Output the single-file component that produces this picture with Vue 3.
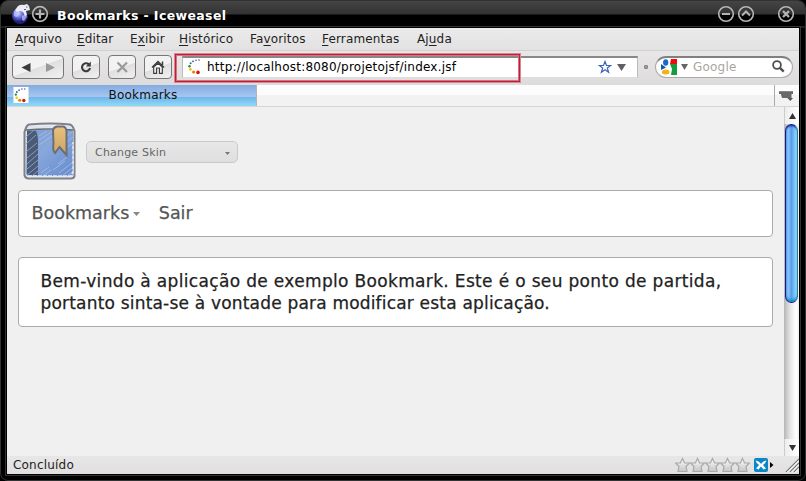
<script setup>
const menus = [
  { pre: '', key: 'A', post: 'rquivo', w: 62 },
  { pre: '', key: 'E', post: 'ditar', w: 53 },
  { pre: 'E', key: 'x', post: 'ibir', w: 49 },
  { pre: '', key: 'H', post: 'istórico', w: 71 },
  { pre: 'Fa', key: 'v', post: 'oritos', w: 72 },
  { pre: '', key: 'F', post: 'erramentas', w: 95 },
  { pre: 'Aj', key: 'u', post: 'da', w: 50 }
]
const dots = [
  [12, 2, .8, '#8b3a8f'], [9, 2.2, .8, '#51458f'], [6, 3.3, .9, '#2d4f9c'],
  [3.6, 5.3, 1, '#28709a'], [2.5, 8.2, 1.2, '#238340'], [3.4, 11.4, 1.4, '#f3c500'],
  [6.6, 14, 1.6, '#ef7d00'], [11, 14.4, 1.8, '#d9160c']
]
</script>

<template>
  <div class="window">
    <header class="titlebar">
      <svg class="globe" width="20" height="22" viewBox="0 0 20 22">
        <defs>
          <radialGradient id="globe" cx=".4" cy=".35"><stop offset="0" stop-color="#c9d3ff" /><stop offset=".5" stop-color="#6a75e0" /><stop offset="1" stop-color="#20207c" /></radialGradient>
        </defs>
        <circle cx="9" cy="13" r="8" fill="url(#globe)" />
        <path d="M3 8l4-1 2 3-3 4-3-1zM11 13l4-2 1 3-3 4-2-1z" fill="#c3ccff" opacity=".7" />
        <path d="M7 3Q10 1 13 2l3-1 2 2 1 4-4 1 1 4-2 1-2-4-3-1-3 1-2-2z" fill="#ececf7" />
        <path d="M15 4h1.500M13 6.500h2" stroke="#666" />
      </svg>
      <svg width="18" height="18" viewBox="0 0 18 18" fill="none" stroke="#b4b4b4">
        <circle cx="9" cy="9" r="7.3" stroke-width="1.7" /><path d="M9 4.500v9M4.500 9h9" stroke-width="2.2" />
      </svg>
      <h1>Bookmarks - Iceweasel</h1>
      <div class="controls">
        <svg width="18" height="18" viewBox="0 0 18 18" fill="none" stroke="#b4b4b4"><circle cx="9" cy="9" r="7.3" stroke-width="1.6" /><path d="M5 9h8" stroke-width="2" /></svg>
        <svg width="18" height="18" viewBox="0 0 18 18" fill="none" stroke="#b4b4b4"><circle cx="9" cy="9" r="7.3" stroke-width="1.6" /><path d="M5 10.500l4-4 4 4" stroke-width="2" /></svg>
        <svg class="close" width="18" height="18" viewBox="0 0 18 18" fill="none" stroke="#b4b4b4"><circle cx="9" cy="9" r="7.3" stroke-width="1.6" /><path d="M6 6l6 6M12 6l-6 6" stroke-width="2.3" /></svg>
      </div>
    </header>

    <div class="client">
      <nav class="menubar">
        <span v-for="m in menus" :key="m.post" :style="{ width: m.w + 'px' }">{{ m.pre }}<u>{{ m.key }}</u>{{ m.post }}</span>
      </nav>

      <div class="toolbar">
        <button class="btn wide">
          <svg width="50" height="22" viewBox="0 0 50 22"><path d="M8.500 11.500l9-4.500v9z" fill="#3c3c3c" /><path d="M42 11.500l-9-4.500v9z" fill="#999" /></svg>
        </button>
        <button class="btn">
          <svg width="26" height="22" viewBox="0 0 26 22"><path d="M15.800 8.300A4 4 0 1 0 17 12" fill="none" stroke="#3c3c3c" stroke-width="2.100" /><path d="M17.800 5.500v5h-5z" fill="#3c3c3c" /></svg>
        </button>
        <button class="btn">
          <svg width="26" height="22" viewBox="0 0 26 22"><path d="M8.500 6.500l9.500 9.500M18 6.500L8.500 16" stroke="#999" stroke-width="2.200" /></svg>
        </button>
        <button class="btn">
          <svg width="26" height="22" viewBox="0 0 26 22"><path d="M7 11.500L13 5.500l6 6M17.500 9V5.500" fill="none" stroke="#3c3c3c" stroke-width="1.500" /><path d="M8.700 11v6.300h2.800V12h3v5.300h2.800V11L13 7.300z" fill="#fff" stroke="#3c3c3c" stroke-width="1.200" /></svg>
        </button>
        <div class="address">
          <svg class="fav" width="16" height="17" viewBox="0 0 16 17"><circle v-for="d in dots" :key="d[0]" :cx="d[0]" :cy="d[1]" :r="d[2]" :fill="d[3]" /></svg>
          <span class="url">http://localhost:8080/projetojsf/index.jsf</span>
          <svg class="star" width="14" height="14" viewBox="0 0 14 14"><path d="M7 1.500l1.500 4h4.200L9.300 8l1.300 4.300L7 9.700l-3.600 2.600L4.700 8 1.300 5.500h4.200z" fill="#fff" stroke="#3a62bd" stroke-width="1.200" /></svg>
          <svg width="9" height="7" viewBox="0 0 9 7"><path d="M0 0h9L4.500 7z" fill="#606060" /></svg>
          <div class="highlight"></div>
        </div>
        <i class="grip"></i>
        <div class="search">
          <svg width="16" height="16" viewBox="0 0 16 16">
            <path d="M9 0h7v5.500H8z" fill="#f00b0b" /><path d="M9 5h7v11H8z" fill="#159b40" />
            <path d="M5 0h5l-1 5 2 5-1 6H1l-1-4 4-4-2-5z" fill="#fff" /><ellipse cx="4.700" cy="3.500" rx="2.600" ry="3.300" fill="#1768cd" /><ellipse cx="4.700" cy="13" rx="3.800" ry="2.500" fill="#f3b216" /><path d="M0 5l5 3.500L0 11z" fill="#1554ad" />
          </svg>
          <svg class="drop" width="7" height="6" viewBox="0 0 7 6"><path d="M0 0h7L3.500 6z" fill="#666" /></svg>
          <span>Google</span>
          <svg class="lens" width="13" height="13" viewBox="0 0 13 13" fill="none" stroke="#505050"><circle cx="5" cy="5" r="3.900" stroke-width="1.800" /><path d="M7.700 7.700l4 4" stroke-width="2.400" /></svg>
        </div>
      </div>

      <div class="tabs">
        <div class="tab">
          <svg width="16" height="16" viewBox="0 0 16 17"><path d="M0 0h16v17H0z" fill="#fff" /><circle v-for="d in dots" :key="d[0]" :cx="d[0]" :cy="d[1]" :r="d[2]" :fill="d[3]" /></svg>
          <span>Bookmarks</span>
        </div>
        <div class="tablist">
          <svg width="15" height="12" viewBox="0 0 15 12"><path d="M0 1h14v3h-1.500v4.500H9l-.5-.5H3L1.800 4H0z" fill="#696969" /><path d="M0 1.500h14" stroke="#888" /><path d="M8.500 8h5.500l-2.700 3z" fill="#555" /></svg>
        </div>
      </div>

      <div class="viewport">
        <main>
          <div class="brand">
            <svg width="54" height="58" viewBox="0 0 54 58">
              <defs>
                <linearGradient id="cover" x2="1" y2="1"><stop offset="0" stop-color="#7c9bd0" /><stop offset=".4" stop-color="#88a8dc" /><stop offset="1" stop-color="#668bcd" /></linearGradient>
                <linearGradient id="ribbon" x2="0" y2="1"><stop stop-color="#e9c07c" /><stop offset="1" stop-color="#cda467" /></linearGradient>
              </defs>
              <path d="M2.500 7Q4 3 6 2.500Q28 .5 47 2.500Q50 4 51.500 9V54Q51 56.500 48 56.500H5Q2 56 1.500 53V10z" fill="#e6ecf6" stroke="#808184" stroke-width="2" />
              <path d="M4 8H50V53Q49 54 46 54H5Q3 53 3 51z" fill="url(#cover)" />
              <path d="M4 9h9q2 4 2 12v32H4z" fill="#4b5b75" />
              <path d="M3 15l7-6M3 22l10-9M3 30l11-9M4 36l11-9M4 42l11-10M4 47l11-9M4 53l11-9M9 54l7-6" stroke="#8ba2cc" stroke-width=".9" />
              <path d="M16 14l8-5M16 18l14-9M16 23l13-9M35 42l9-7M30 48l12-9M36 51l13-10M39 54l10-8M43 55l6-5M44 14l6-5M44 20l6-5M43 26l7-5M18 51l8-6M20 54l8-6" stroke="#a9bfe6" stroke-width=".8" />
              <path d="M6 4h42l2 3.500H4z" fill="#dde5f2" /><path d="M3 8Q26 6 50 8" stroke="#666c76" stroke-width="1.600" fill="none" />
              <path d="M5 54h43l2-4V20" stroke="#e3eaf7" stroke-width="1.500" stroke-dasharray="4 1" fill="none" />
              <path d="M30 8Q31 5 34 4.500H40Q43 5 43.500 9L43.500 33L36.500 25L32 31Q29.500 29 30.500 21z" fill="url(#ribbon)" stroke="#6c6f73" stroke-width="2" />
            </svg>
            <div class="skin"><span>Change Skin</span><svg width="5" height="3" viewBox="0 0 5 3"><path d="M0 0h5L2.500 3z" fill="#777" /></svg></div>
          </div>
          <nav class="panel links"><span class="bm">Bookmarks</span><svg width="7" height="4" viewBox="0 0 7 4"><path d="M0 0h7L3.500 4z" fill="#888" /></svg><span class="out">Sair</span></nav>
          <section class="panel welcome">
            <p class="l1">Bem-vindo à aplicação de exemplo Bookmark. Este é o seu ponto de partida,</p>
            <p class="l2">portanto sinta-se à vontade para modificar esta aplicação.</p>
          </section>
        </main>
        <aside class="scroll">
          <div class="arrow"><svg width="7" height="6" viewBox="0 0 7 6"><path d="M3.500 0L7 6H0z" fill="#333" /></svg></div>
          <div class="thumb"></div>
          <div class="arrow down"><svg width="7" height="6" viewBox="0 0 7 6"><path d="M0 0h7L3.500 6z" fill="#333" /></svg></div>
        </aside>
      </div>

      <footer class="status">
        <span>Concluído</span>
        <svg class="stars" width="75" height="16" viewBox="0 0 75 16">
          <defs><linearGradient id="star" x2="0" y2="1"><stop stop-color="#fff" /><stop offset="1" stop-color="#c4c4c4" /></linearGradient></defs>
          <path v-for="n in 5" :key="n" :transform="`translate(${(n - 1) * 15} 0)`" d="M7.500 1.500L9.600 6h4.700L11 9.500l1 5H3l1-5L.7 6h4.700z" fill="url(#star)" stroke="#a9a9a9" stroke-width="1.200" />
        </svg>
        <svg class="xm" width="14" height="14" viewBox="0 0 14 14"><rect width="14" height="14" rx="2" fill="#0c86c6" /><path d="M1.500 2.500Q5.500 3 7 6Q8.500 3 12.500 2.500Q11.500 5.500 9 7L12 10.500L9.500 11.500L7 8.500L4.500 11.500L2 10.500L5 7Q2.500 5.500 1.500 2.500z" fill="#fff" /></svg>
        <svg class="next" width="4" height="6" viewBox="0 0 4 6"><path d="M0 0l3.500 3L0 6z" fill="#000" /></svg>
        <svg width="14" height="14" viewBox="0 0 14 14"><path d="M1 14L14 1M5 14l9-9M9 14l5-5" stroke="#777" stroke-width="1.200" /><path d="M2.500 14L14 2.500M6.500 14L14 6.500M10.500 14l3.500-3.500" stroke="#fff" /></svg>
      </footer>
    </div>
  </div>
</template>

<style>
body { background: #000; overflow: hidden; }
</style>

<style scoped>
* { box-sizing: border-box; }
svg { display: block; flex: none; }
.window { width: 806px; height: 481px; background: #000; border: 1px solid #333; border-radius: 8px; padding: 0 6px 6px; font: 12px "DejaVu Sans", sans-serif; color: #222; white-space: nowrap; overflow: hidden; }
.titlebar { height: 27px; margin: 0 -6px; padding-left: 11px; display: flex; align-items: center; background: linear-gradient(#454545, #323232 13px, #000 14px, #000 25px, #3c3c3c 26px, #000 27px); }
.globe { margin: 0 0 2px -1px; }
.globe + svg { margin-bottom: 1px; }
h1 { margin: 2px 0 0 8px; font-size: 12.500px; font-weight: bold; color: #fff; letter-spacing: .38px; }
.controls { margin: 0 -2px 1px auto; padding-right: 10px; display: flex; gap: 2px; }
.close { margin-left: 20px; margin-right: 2px; }
.client { height: 446px; background: #f0f0f0; display: flex; flex-direction: column; overflow: hidden; outline: 1px solid #000; box-shadow: 0 0 0 2px #333; }
.menubar { flex: none; height: 23px; padding-left: 8px; display: flex; align-items: center; background: linear-gradient(#ebebeb, #e3e1e2); border-bottom: 1px solid #d2d0d1; letter-spacing: .15px; }
.menubar span { flex: none; }
.menubar u { text-underline-offset: 2px; }
.toolbar { flex: none; height: 34px; padding: 0 6px 2px 5px; display: flex; align-items: center; background: linear-gradient(#e8e7e7, #dedbdc); }
.btn { width: 28px; height: 24px; margin: 0 8px 0 0; padding: 0; border: 1px solid #777; border-radius: 4px; background: linear-gradient(160deg, #f2f2f2 50%, #dfdfdf 52%, #f1f1f1); }
.wide { width: 52px; }
.address { position: relative; width: 456px; height: 22px; margin: 0 6px 0 2px; padding: 0 11px 0 4px; display: flex; align-items: center; background: #fff; border: 1px solid #bbb; border-top: 2px solid #888; border-bottom-color: #ddd; }
.fav { margin-bottom: 2px; }
.url { margin: 0 0 2px 4px; color: #000; letter-spacing: .22px; }
.star { margin: 0 5px 1px auto; }
.highlight { position: absolute; left: -9px; top: -5px; width: 347px; height: 30px; border: 1px solid #dc8492; box-shadow: inset 0 0 0 1px #bd1e38, inset 0 0 0 2px #d8707f; }
.grip { width: 4px; height: 4px; border: 1px solid #888; border-radius: 1px; background: #999; }
.search { width: 138px; height: 22px; margin-left: 7px; padding: 0 7px 0 5px; display: flex; align-items: center; background: #fff; border: 1px solid #aaa; border-top: 2px solid #808080; border-radius: 11px; }
.search > svg { margin-bottom: 2px; }
.search > .drop { margin: 0 5px 2px 4px; }
.search span { flex: 1; margin-bottom: 2px; color: #aaa5a0; letter-spacing: .2px; }
.tabs { flex: none; height: 22px; display: flex; justify-content: space-between; background: linear-gradient(#fcfcfc 0 48%, #f2f2f2 50%); border-bottom: 1px solid #d5d5d5; }
.tab { width: 250px; padding: 0 0 1px 6px; display: flex; align-items: center; background: linear-gradient(#84abe0, #a4c6ef 55%, #70b5e9 58%, #91daf8); border-right: 1px solid #b5b5b5; color: #111; }
.tab span { flex: 1; padding: 0 0 1px 1px; text-align: center; letter-spacing: .2px; }
.tablist { width: 25px; padding: 5px 0 0 4px; border-left: 1px solid #aaa; }
.viewport { flex: 1; min-height: 0; display: flex; }
main { flex: 1; padding: 15px 11px 0; }
.brand { height: 68px; padding-left: 5px; display: flex; }
.skin { width: 152px; height: 22px; margin: 19px 0 0 9px; padding: 0 7px 0 8px; display: flex; align-items: center; justify-content: space-between; border: 1px solid #c9c9c9; border-radius: 5px; background: linear-gradient(#e7e7e7, #dfdfdf); font-size: 11px; letter-spacing: .2px; color: #666; }
.skin svg { margin-top: 2px; }
.panel { width: 755px; border: 1px solid #aaa; border-radius: 4px; background: #fff; -webkit-text-stroke: .25px; }
.links { height: 47px; padding: 0 0 1px 12.500px; display: flex; align-items: center; font-size: 17.500px; color: #555; }
.links svg { margin: 1px 0 0 3.500px; }
.out { margin-left: 19px; }
.welcome { height: 70px; margin-top: 20px; padding: 12px 0 0 21.500px; font-size: 17px; line-height: 22px; }
.welcome p { margin: 0; }
.l1 { letter-spacing: .335px; }
.l2 { letter-spacing: .19px; }
.scroll { width: 15px; display: flex; flex-direction: column; align-items: stretch; background: linear-gradient(90deg, #b5b5b5, #e4e4e4 40%, #fff 80%, #eee); }
.arrow { height: 17px; display: grid; place-items: center; background: linear-gradient(90deg, #eee, #fff); border-left: 1px solid #ccc; }
.thumb { height: 179px; margin: 0 1px; border: 1px solid #101c8c; border-right-color: #41758a; border-radius: 7px; background: linear-gradient(90deg, #69a6ed, #8fc4fa 20%, #569ceb 50%, #7ac9fb 80%, #9aeafd); box-shadow: inset 0 2px 2px -1px #0b20a0, inset 0 -3px 3px -1px #0b8bc5; }
.down { margin-top: auto; }
.status { flex: none; height: 18px; padding-left: 6px; display: flex; align-items: center; background: linear-gradient(#e8e7e7, #e1dfdf); }
.status > span { letter-spacing: .2px; }
.stars { margin-left: auto; margin-right: -1px; }
.xm { margin-left: 5px; }
.next { margin: 0 11px 0 2px; }
</style>
